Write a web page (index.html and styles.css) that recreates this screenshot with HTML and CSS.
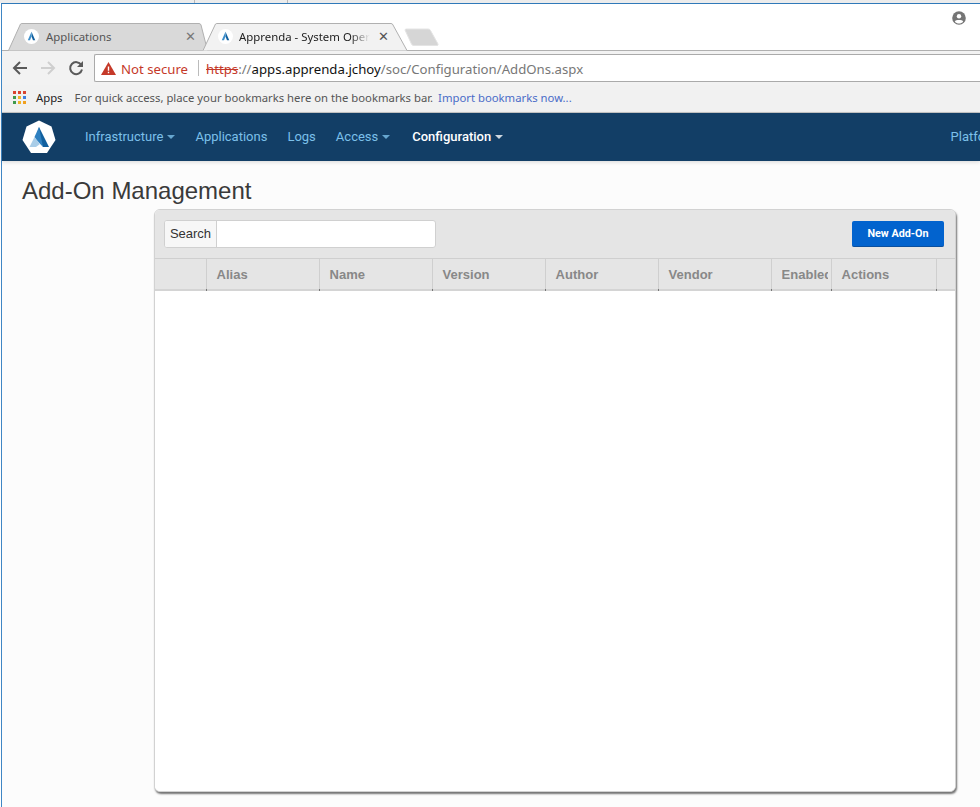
FILE: index.html
```html
<!doctype html>
<html lang="en">
<head>
    <meta charset="utf-8"/>
    <title>Add-On Management</title>
    <link rel="stylesheet" href="styles.css">
</head>
<body>
    <div class="backdrop">
        <span class="backdrop-a"></span>
        <span class="backdrop-b"></span>
    </div>
    <div class="window">

        <!-- tab strip -->
        <div class="tabstrip">
            <div class="tab">
                <svg class="tab-bg" width="200" height="28" viewBox="0 0 200 28">
                    <path d="M0.5 27.5 L12.5 1 Q13 0.5 14 0.5 L191 0.5 Q192.5 0.5 193 2 L199.5 27.5" fill="#d9d9d9" stroke="#b0b0b0"/>
                </svg>
                <svg class="favicon" width="15" height="15" viewBox="0 0 16 16">
                    <circle cx="8" cy="8" r="8" fill="#fff"/>
                    <path d="M8 3 L12 12 L9.6 12 L8 8 Z" fill="#11609f"/>
                    <path d="M8 3 L8 8 L6.4 12 L4 12 Z" fill="#3d8fcb"/>
                </svg>
                <span class="tab-title">Applications</span>
                <span class="tab-close">✕</span>
            </div>
            <div class="tab tab-active">
                <svg class="tab-bg" width="206" height="28" viewBox="0 0 206 28">
                    <path d="M0 27.5 L12.5 1 Q13 0.5 14 0.5 L188 0.5 Q189.5 0.5 190 2 L204 27.5 L206 27.5" fill="#f2f2f2" stroke="#b0b0b0"/>
                </svg>
                <svg class="favicon" width="15" height="15" viewBox="0 0 16 16">
                    <circle cx="8" cy="8" r="8" fill="#fff"/>
                    <path d="M8 3 L12 12 L9.6 12 L8 8 Z" fill="#11609f"/>
                    <path d="M8 3 L8 8 L6.4 12 L4 12 Z" fill="#3d8fcb"/>
                </svg>
                <span class="tab-title tab-title-fade">Apprenda - System Operations Center</span>
                <span class="tab-close tab-close-dark">✕</span>
            </div>
            <svg class="newtab" width="36" height="19" viewBox="0 0 36 19">
                <path d="M1 2 Q1 1 2.5 1 L24 1 Q26 1 26.5 2.5 L34 16 Q34.5 17.5 33 17.5 L10 17.5 Q8 17.5 7.5 16 Z" fill="#d6d6d6" stroke="#e4e4e4"/>
            </svg>
            <svg class="profile" width="14" height="14" viewBox="0 0 14 14">
                <circle cx="7" cy="7" r="6.8" fill="#757575"/>
                <circle cx="7" cy="5.2" r="2.2" fill="#fff"/>
                <path d="M2.8 10.4 C3.6 8.6 10.4 8.6 11.2 10.4 C10.2 11.8 8.6 12.4 7 12.4 C5.4 12.4 3.8 11.8 2.8 10.4 Z" fill="#fff"/>
            </svg>
        </div>

        <!-- address bar -->
        <div class="toolbar">
            <svg class="tool" width="18" height="18" viewBox="0 0 18 18">
                <path d="M16 9 H3 M9 3 L3 9 L9 15" fill="none" stroke="#5a5a5a" stroke-width="2"/>
            </svg>
            <svg class="tool" width="18" height="18" viewBox="0 0 18 18">
                <path d="M2 9 H15 M9 3 L15 9 L9 15" fill="none" stroke="#cfcfcf" stroke-width="2"/>
            </svg>
            <svg class="tool" width="18" height="18" viewBox="0 0 18 18">
                <path d="M14.3 6 A6 6 0 1 0 15 10.5" fill="none" stroke="#5a5a5a" stroke-width="2"/>
                <path d="M16 2 V8 H10 Z" fill="#5a5a5a"/>
            </svg>
            <div class="omnibox">
                <svg class="warn" width="15" height="13" viewBox="0 0 15 13">
                    <path d="M7.5 0 L15 13 H0 Z" fill="#c53929"/>
                    <path d="M6.8 4.5 H8.2 V8.8 H6.8 Z M6.8 9.8 H8.2 V11.2 H6.8 Z" fill="#fff"/>
                </svg>
                <span class="not-secure">Not secure</span>
                <span class="omni-sep"></span>
                <span class="url"><span class="url-https">https</span><span class="url-rest">://</span>apps.apprenda.jchoy<span class="url-rest">/soc/Configuration/AddOns.aspx</span></span>
            </div>
        </div>

        <!-- bookmarks bar -->
        <div class="bookmarks">
            <svg class="apps-icon" width="13" height="13" viewBox="0 0 13 13">
                <rect x="0" y="0" width="3" height="3" fill="#d9442f"/>
                <rect x="5" y="0" width="3" height="3" fill="#d9442f"/>
                <rect x="10" y="0" width="3" height="3" fill="#d9442f"/>
                <rect x="0" y="5" width="3" height="3" fill="#3f9a4d"/>
                <rect x="5" y="5" width="3" height="3" fill="#f0b429"/>
                <rect x="10" y="5" width="3" height="3" fill="#3f7fe0"/>
                <rect x="0" y="10" width="3" height="3" fill="#3f9a4d"/>
                <rect x="5" y="10" width="3" height="3" fill="#f0b429"/>
                <rect x="10" y="10" width="3" height="3" fill="#f0a020"/>
            </svg>
            <span class="apps-label">Apps</span>
            <span class="bm-text">For quick access, place your bookmarks here on the bookmarks bar.</span>
            <span class="bm-link">Import bookmarks now...</span>
        </div>

        <!-- app nav -->
        <nav class="navbar">
            <svg class="logo" width="34" height="34" viewBox="0 0 34 34">
                <path d="M17 0.5 L29.5 6.5 L33.5 20 L25 33 L9 33 L0.5 20 L4.5 6.5 Z" fill="#fff"/>
                <path d="M17 7 L27 27 L21 27 L15 14 Z" fill="#11609f"/>
                <path d="M17 7 L21 27 L14.5 20 L12.5 17 Z" fill="#2f80c0"/>
                <path d="M12.5 17 L18 24 L14 27 L7.5 27 Z" fill="#a9cde8"/>
            </svg>
            <a class="nav-item">Infrastructure<i class="caret"></i></a>
            <a class="nav-item">Applications</a>
            <a class="nav-item">Logs</a>
            <a class="nav-item">Access<i class="caret"></i></a>
            <a class="nav-item nav-current">Configuration<i class="caret"></i></a>
            <a class="nav-item nav-right">Platform</a>
        </nav>

        <div class="content">
            <h1 class="page-title">Add-On Management</h1>
            <div class="panel">
                <div class="panel-tools">
                    <div class="search">
                        <span class="search-label">Search</span>
                        <span class="search-input"></span>
                    </div>
                    <button class="btn-new">New Add-On</button>
                </div>
                <div class="grid-head">
                    <div class="col col-check"></div>
                    <div class="col col-std">Alias</div>
                    <div class="col col-std">Name</div>
                    <div class="col col-std">Version</div>
                    <div class="col col-std">Author</div>
                    <div class="col col-std">Vendor</div>
                    <div class="col col-enabled"><span class="col-clip">Enabled</span></div>
                    <div class="col col-actions">Actions</div>
                    <div class="col col-end"></div>
                </div>
                <div class="grid-body"></div>
            </div>
        </div>
    </div>
</body>
</html>
```

FILE: styles.css
```css
* {
    box-sizing: border-box;
}

html, body {
    margin: 0;
    padding: 0;
    height: 807px;
    overflow: hidden;
    background: #fff;
}

body {
    font-family: "Liberation Sans", Arial, sans-serif;
}

.backdrop {
    height: 3px;
    background: #ececec;
    position: relative;
}

.backdrop-a, .backdrop-b {
    position: absolute;
    top: 0;
    width: 1px;
    height: 3px;
    background: #b8b8b8;
}

.backdrop-a {
    left: 194px;
}

.backdrop-b {
    left: 287px;
}

.window {
    height: 804px;
    margin-left: 1px;
    border-left: 1px solid #3f86c4;
    border-top: 1px solid #2f79b9;
    display: flex;
    flex-direction: column;
    background: #fcfcfc;
}

/* tab strip */
.tabstrip {
    height: 47px;
    flex: none;
    display: flex;
    align-items: flex-end;
    padding-left: 6px;
    background: #fff;
    border-bottom: 1px solid #b0b0b0;
    position: relative;
}

.tab {
    width: 195px;
    height: 28px;
    margin-bottom: -1px;
    padding: 0 7px 2px 16px;
    display: flex;
    align-items: center;
    position: relative;
    font-family: "Noto Sans", "Open Sans", sans-serif;
    font-size: 11.4px;
    color: #555;
}

.tab-active {
    width: 203px;
    padding: 0 17px 2px 15px;
    color: #222;
}

.tab-bg {
    position: absolute;
    left: 0;
    top: 0;
}

.favicon {
    position: relative;
    flex: none;
    margin-right: 7px;
}

.tab-active .favicon {
    margin-right: 6px;
}

.tab-title {
    position: relative;
    flex: 1;
    min-width: 0;
    white-space: nowrap;
    overflow: hidden;
}

.tab-title-fade {
    -webkit-mask-image: linear-gradient(to right, #000 85%, transparent);
    mask-image: linear-gradient(to right, #000 85%, transparent);
}

.tab-close {
    position: relative;
    flex: none;
    margin-left: 8px;
    font-family: "DejaVu Sans", sans-serif;
    font-size: 13px;
    font-weight: bold;
    color: #777;
}

.tab-close-dark {
    color: #555;
}

.newtab {
    flex: none;
    margin: 0 0 3px -2px;
}

.profile {
    position: absolute;
    right: 14px;
    top: 7px;
}

/* address bar */
.toolbar {
    height: 34px;
    flex: none;
    display: flex;
    align-items: center;
    padding: 0 0 0 9px;
    gap: 10px;
    background: #f2f2f2;
    font-family: "Noto Sans", "Open Sans", sans-serif;
}

.tool {
    flex: none;
}

.omnibox {
    flex: 1;
    height: 28px;
    margin-left: -1px;
    padding: 2px 0 0 6px;
    display: flex;
    align-items: center;
    background: #fff;
    border: 1px solid #aaa;
    border-right: 0;
    border-radius: 2px 0 0 2px;
    font-family: "Noto Sans", sans-serif;
    font-size: 13.2px;
    white-space: nowrap;
}

.warn {
    flex: none;
    margin-top: -2px;
}

.not-secure {
    margin-left: 5px;
    color: #c53929;
}

.omni-sep {
    width: 1px;
    height: 16px;
    margin: -2px 7px 0 10px;
    background: #bbb;
}

.url {
    color: #111;
}

.url-https {
    color: #c53929;
    text-decoration: line-through;
}

.url-rest {
    color: #777;
}

/* bookmarks */
.bookmarks {
    height: 28px;
    flex: none;
    display: flex;
    align-items: center;
    padding: 0 0 2px 11px;
    background: #f1f1f1;
    border-bottom: 1px solid #c8c8c8;
    font-family: "Noto Sans", sans-serif;
    font-size: 11.3px;
    white-space: nowrap;
}

.apps-label {
    margin-left: 10px;
    color: #222;
}

.bm-text {
    margin-left: 12px;
    color: #555;
}

.bm-link {
    margin-left: 5px;
    color: #4a6cc8;
}

/* app nav */
.navbar {
    height: 48px;
    flex: none;
    display: flex;
    align-items: center;
    padding-left: 20px;
    background: #123e66;
    font-family: Roboto, sans-serif;
    font-size: 13px;
    line-height: 47px;
    white-space: nowrap;
    box-shadow: 0 1px 4px rgba(0, 0, 0, 0.15);
    overflow: hidden;
}

.logo {
    flex: none;
    margin-right: 29px;
}

.nav-item {
    flex: none;
    height: 48px;
    margin-right: 20px;
    color: #7cc0ea;
}

.nav-current {
    margin-left: 2px;
    color: #fff;
    font-weight: 500;
}

.nav-right {
    margin-left: auto;
    margin-right: -21px;
}

.caret {
    display: inline-block;
    margin-left: 4px;
    vertical-align: 2px;
    border-top: 4px solid currentColor;
    border-left: 4px solid transparent;
    border-right: 4px solid transparent;
    opacity: 0.8;
}

/* page */
.content {
    flex: 1;
    min-height: 0;
    padding: 0 0 15px 20px;
    display: flex;
    flex-direction: column;
}

.page-title {
    margin: 17px 0 5px;
    height: 26px;
    line-height: 26px;
    font-size: 24px;
    font-weight: normal;
    color: #3a3a3a;
}

.panel {
    flex: 1;
    width: 802px;
    margin-left: 132px;
    display: flex;
    flex-direction: column;
    background: #fff;
    border: 1px solid #d2d2d2;
    border-radius: 6px;
    box-shadow: 1px 2px 2px rgba(0, 0, 0, 0.55);
    overflow: hidden;
}

.panel-tools {
    height: 48px;
    flex: none;
    display: flex;
    align-items: center;
    justify-content: space-between;
    padding: 0 11px 0 9px;
    background: #e5e5e5;
}

.search {
    display: flex;
    width: 272px;
    height: 28px;
    background: #fff;
    border: 1px solid #d0d0d0;
    border-radius: 3px;
    overflow: hidden;
}

.search-label {
    width: 52px;
    flex: none;
    line-height: 25px;
    text-align: center;
    font-size: 13px;
    color: #333;
    background: #f7f7f7;
    border-right: 1px solid #d0d0d0;
}

.search-input {
    flex: 1;
}

.btn-new {
    width: 92px;
    height: 26px;
    padding: 0;
    border: 0;
    border-bottom: 1px solid #0a4f9e;
    border-radius: 2px;
    background: #0263ce;
    color: #fff;
    font-family: Roboto, sans-serif;
    font-size: 10.8px;
    font-weight: bold;
}

.grid-head {
    height: 33px;
    flex: none;
    display: flex;
    background: #e5e5e5;
    border-top: 1px solid #cfcfcf;
    font-size: 13px;
    font-weight: bold;
    color: #888;
}

.col {
    flex: none;
    padding-left: 9.6px;
    line-height: 32px;
    overflow: hidden;
    white-space: nowrap;
    background:
        linear-gradient(#777, #777) right bottom / 1px 2px no-repeat,
        linear-gradient(#d4d4d4, #d4d4d4) left bottom / 100% 2px no-repeat,
        linear-gradient(#cfcfcf, #cfcfcf) right top / 1px 100% no-repeat;
}

.col-check {
    width: 52px;
}

.col-std {
    width: 113px;
}

.col-enabled {
    width: 60px;
}

.col-clip {
    display: block;
    width: 46px;
    overflow: hidden;
}

.col-actions {
    width: 105px;
}

.col-end {
    flex: 1;
    background: linear-gradient(#d4d4d4, #d4d4d4) left bottom / 100% 2px no-repeat;
}

.grid-body {
    flex: 1;
    background: #fff;
}
```
